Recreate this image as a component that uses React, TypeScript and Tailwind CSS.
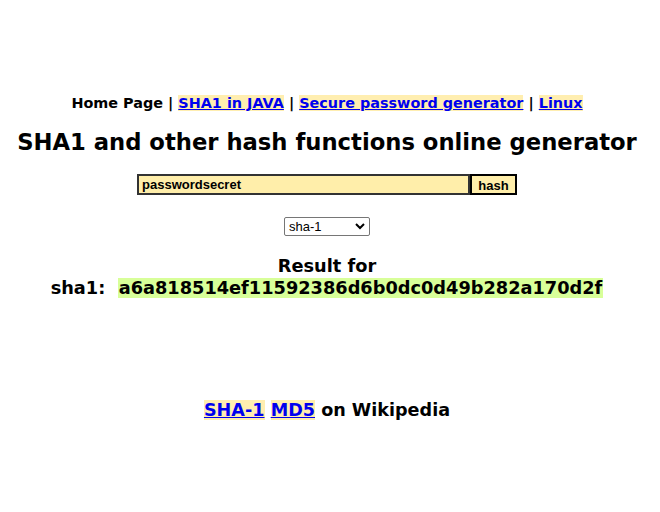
export default function App() {
  return (
    <div className="min-h-screen bg-white text-black text-center font-bold pr-[6px]" style={{ fontFamily: '"DejaVu Sans", Verdana, sans-serif' }}>
      <div className="pt-[94px] text-[14.4px] leading-[18px]">
        Home Page |{' '}
        <a href="#" className="bg-[#ffeeb0] text-[#0000ee] underline">SHA1 in JAVA</a> |{' '}
        <a href="#" className="bg-[#ffeeb0] text-[#0000ee] underline">Secure password generator</a> |{' '}
        <a href="#" className="bg-[#ffeeb0] text-[#0000ee] underline">Linux</a>
      </div>
      <h1 className="mt-[15px] text-[22.7px] leading-[30px]">SHA1 and other hash functions online generator</h1>
      <form className="mt-[17px] flex justify-center">
        <input
          defaultValue="passwordsecret"
          className="w-[333px] h-[21px] border-2 border-[#333] bg-[#ffeeaa] px-[3px] text-[13px] font-bold outline-none"
          style={{ fontFamily: 'Arial, "Liberation Sans", sans-serif' }}
        />
        <button
          type="button"
          className="w-[47px] h-[21px] border-2 border-black bg-[#ffeeaa] text-[13px] font-bold"
          style={{ fontFamily: 'Arial, "Liberation Sans", sans-serif' }}
        >
          hash
        </button>
      </form>
      <div className="mt-[22px] flex justify-center">
        <div
          className="w-[86px] h-[19px] border border-[#767676] rounded-[2px] bg-white flex items-center justify-between pl-[4px] pr-[4px] text-[13px] font-normal"
          style={{ fontFamily: 'Arial, "Liberation Sans", sans-serif' }}
        >
          <span>sha-1</span>
          <svg width="10" height="7" viewBox="0 0 10 7" fill="none" stroke="black" strokeWidth="2">
            <path d="M1 1l4 4 4-4" />
          </svg>
        </div>
      </div>
      <div className="mt-[19px] text-[17.75px] leading-[22px]">Result for</div>
      <div className="text-[17.75px] leading-[22px]">
        sha1:&nbsp; <span className="bg-[#d8ff99] px-[1px]">a6a818514ef11592386d6b0dc0d49b282a170d2f</span>
      </div>
      <div className="mt-[100px] text-[17.6px] leading-[22px]">
        <a href="#" className="bg-[#ffeeb0] text-[#0000ee] underline">SHA-1</a>{' '}
        <a href="#" className="bg-[#ffeeb0] text-[#0000ee] underline">MD5</a> on Wikipedia
      </div>
    </div>
  );
}
